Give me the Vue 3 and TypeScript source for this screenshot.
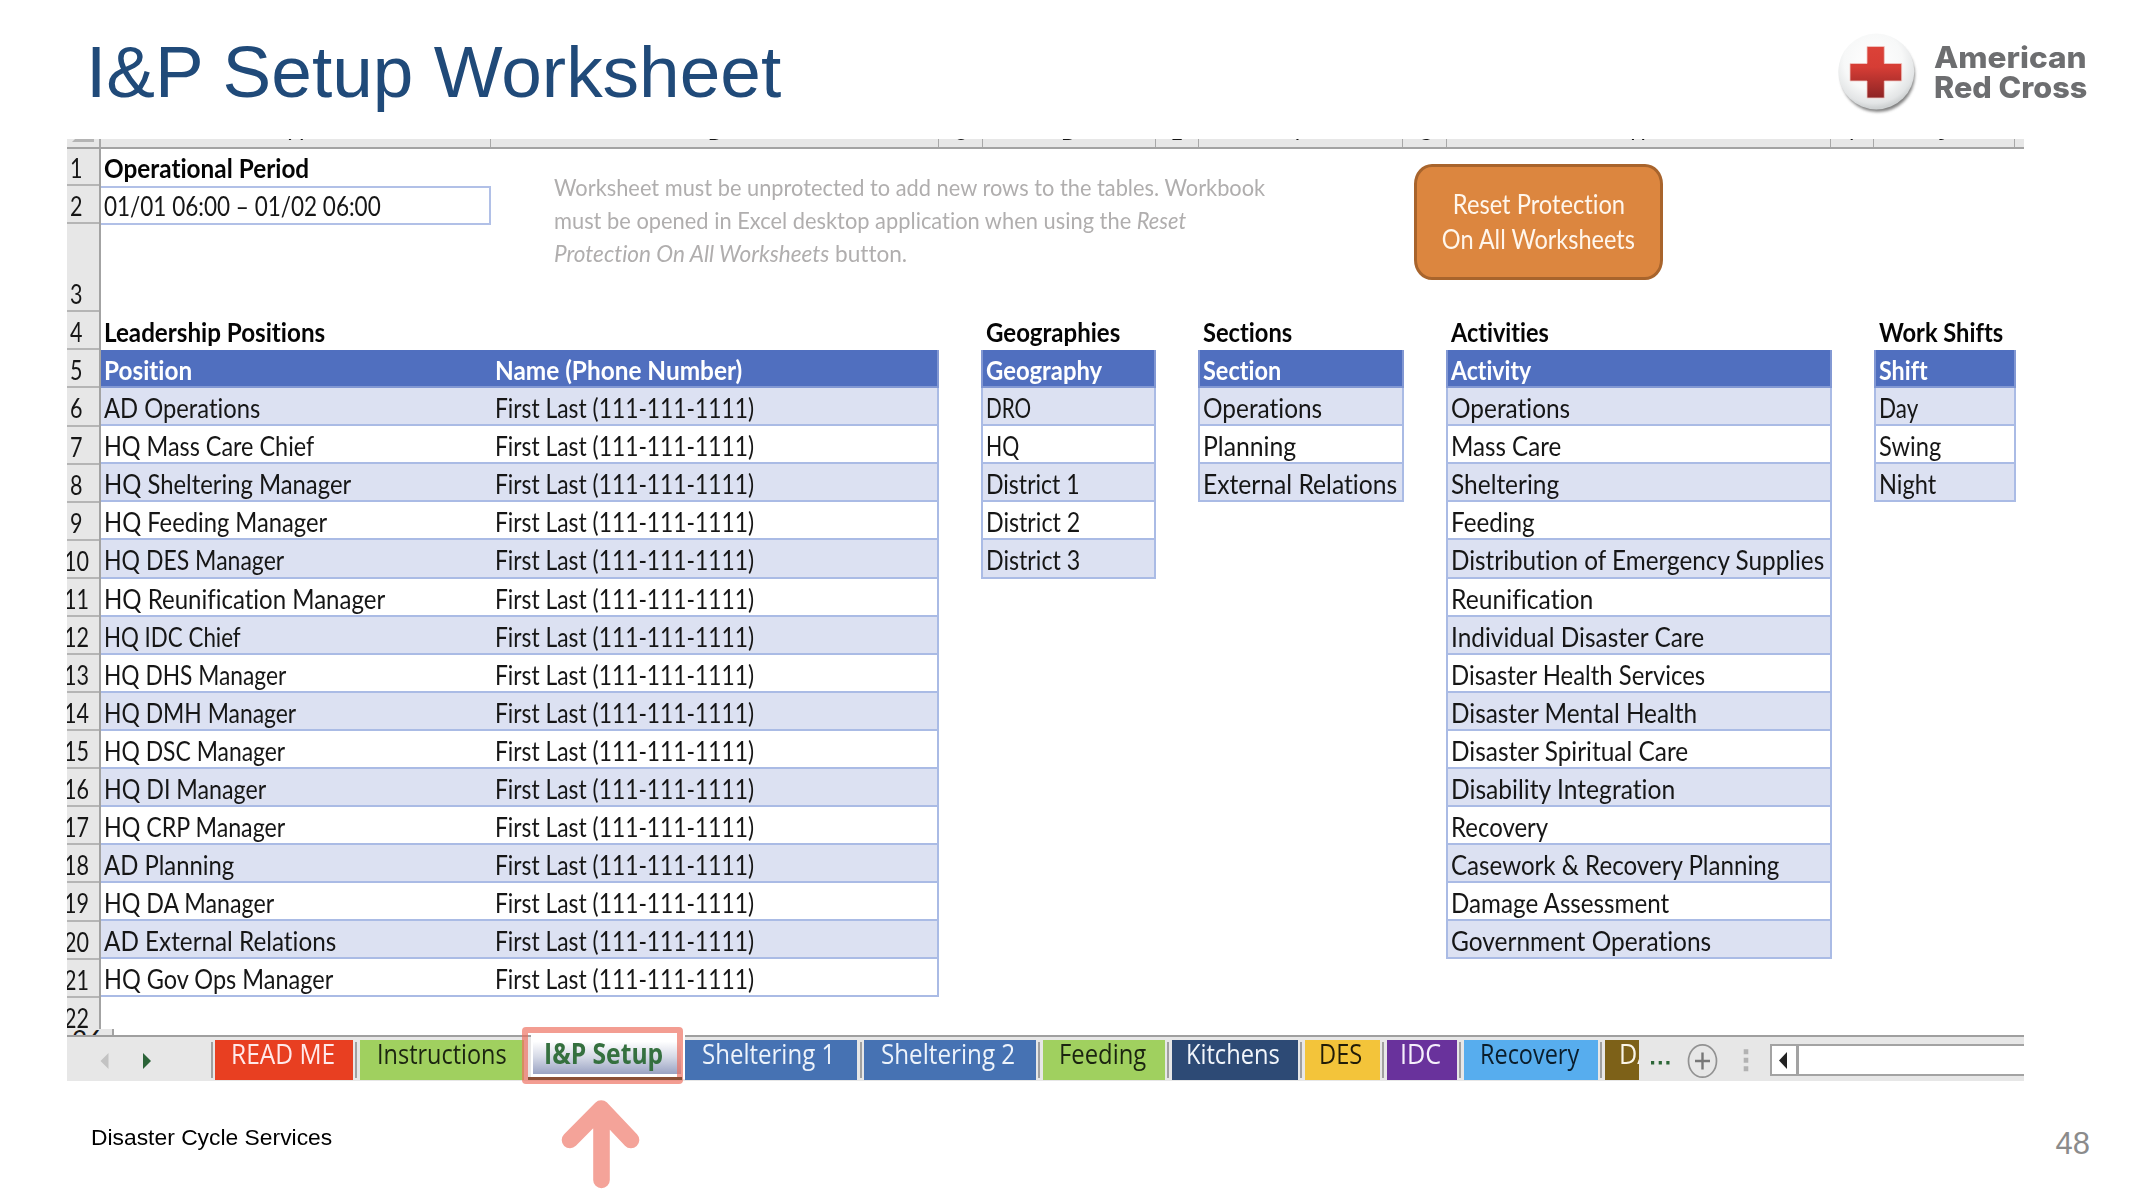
<script setup lang="ts">
import type { Directive } from 'vue'

type Cell = [text: string, width: number]

interface SheetTable {
  title: Cell
  head: Cell
  left: number
  width: number
  rows: Cell[]
}

interface Tab {
  label: string
  width: number
  textLeft: number
  textWidth: number
  bg: string
  fg: string
}

// Condenses a label horizontally so that it takes the given width.
const vFit: Directive<HTMLElement, number> = {
  mounted(el, binding) {
    const natural = el.getBoundingClientRect().width
    if (natural > 0) el.style.transform = `scaleX(${(binding.value + 1.2) / natural})`
  },
}

const columns: Cell[] = [
  ['A', 390], ['B', 448], ['C', 43.5], ['D', 173.5], ['E', 43], ['F', 204],
  ['G', 43.5], ['H', 384.5], ['I', 43], ['J', 141], ['', 9],
]

const rowNumbers = Array.from({ length: 22 }, (_, i) => i + 1)

const leaders: Cell[] = [
  ['AD Operations', 155], ['HQ Mass Care Chief', 209], ['HQ Sheltering Manager', 246],
  ['HQ Feeding Manager', 222], ['HQ DES Manager', 179], ['HQ Reunification Manager', 280],
  ['HQ IDC Chief', 135.5], ['HQ DHS Manager', 181], ['HQ DMH Manager', 191],
  ['HQ DSC Manager', 180], ['HQ DI Manager', 161], ['HQ CRP Manager', 180],
  ['AD Planning', 129], ['HQ DA Manager', 169], ['AD External Relations', 231],
  ['HQ Gov Ops Manager', 228],
]

const tables: SheetTable[] = [
  {
    title: ['Geographies', 133], head: ['Geography', 115], left: 42, width: 175,
    rows: [['DRO', 44], ['HQ', 32], ['District 1', 92.5], ['District 2', 93], ['District 3', 93]],
  },
  {
    title: ['Sections', 88], head: ['Section', 77], left: 42, width: 206,
    rows: [['Operations', 118], ['Planning', 92], ['External Relations', 193]],
  },
  {
    title: ['Activities', 96.5], head: ['Activity', 79], left: 42, width: 386,
    rows: [
      ['Operations', 118], ['Mass Care', 109], ['Sheltering', 107], ['Feeding', 82.5],
      ['Distribution of Emergency Supplies', 372], ['Reunification', 141],
      ['Individual Disaster Care', 252], ['Disaster Health Services', 253],
      ['Disaster Mental Health', 245], ['Disaster Spiritual Care', 236],
      ['Disability Integration', 223], ['Recovery', 96], ['Casework & Recovery Planning', 327],
      ['Damage Assessment', 217], ['Government Operations', 259],
    ],
  },
  {
    title: ['Work Shifts', 123], head: ['Shift', 47.5], left: 42, width: 142,
    rows: [['Day', 38], ['Swing', 61], ['Night', 56]],
  },
]

const tabs: Tab[] = [
  { label: 'READ ME', width: 138, textLeft: 17.3, textWidth: 103, bg: '#e83f21', fg: '#ffe9ea' },
  { label: 'Instructions', width: 164, textLeft: 18.3, textWidth: 128.5, bg: '#a0d05f', fg: '#1b2410' },
  { label: 'I&P Setup', width: 154.5, textLeft: 12.7, textWidth: 118, bg: '', fg: '#35703f' },
  { label: 'Sheltering 1', width: 172, textLeft: 18.5, textWidth: 132, bg: '#4672b3', fg: '#edf3fb' },
  { label: 'Sheltering 2', width: 172, textLeft: 18.5, textWidth: 133, bg: '#4672b3', fg: '#edf3fb' },
  { label: 'Feeding', width: 122, textLeft: 17.3, textWidth: 86, bg: '#a0d05f', fg: '#1b2410' },
  { label: 'Kitchens', width: 126, textLeft: 15.5, textWidth: 92.5, bg: '#2d4a75', fg: '#f2f6fb' },
  { label: 'DES', width: 75, textLeft: 16, textWidth: 42, bg: '#f3c43a', fg: '#211c08' },
  { label: 'IDC', width: 70, textLeft: 14.5, textWidth: 40, bg: '#69329c', fg: '#f5effb' },
  { label: 'Recovery', width: 134, textLeft: 17.5, textWidth: 98, bg: '#57adee', fg: '#0b1d2b' },
  { label: 'DA', width: 34, textLeft: 16, textWidth: 33, bg: '#7d6118', fg: '#faf5e8' },
]
</script>

<template>
  <main class="slide">
    <header class="top">
      <h1 class="title"><span v-fit="694">I&amp;P Setup Worksheet</span></h1>
      <div class="brand">
        <svg class="brand-mark" width="90" height="90" viewBox="0 0 90 90">
          <defs>
            <radialGradient id="disc" cx=".46" cy=".36" r=".62">
              <stop offset="0" stop-color="#fff" />
              <stop offset=".62" stop-color="#f7f8f8" />
              <stop offset=".9" stop-color="#e3e5e6" />
              <stop offset="1" stop-color="#cfd2d3" />
            </radialGradient>
            <linearGradient id="cross" x1="0" y1="0" x2="0" y2="1">
              <stop offset="0" stop-color="#dc4238" />
              <stop offset=".4" stop-color="#d63d35" />
              <stop offset="1" stop-color="#8d2425" />
            </linearGradient>
            <filter id="soft" x="-20%" y="-20%" width="140%" height="140%">
              <feGaussianBlur stdDeviation="1.8" />
            </filter>
          </defs>
          <circle cx="45.800" cy="47" r="37" fill="#555" opacity=".75" filter="url(#soft)" />
          <circle cx="44.300" cy="43.500" r="38" fill="url(#disc)" />
          <path d="M35 18.500h17.300v17h17.400v17.500h-17.400v17h-17.300v-17h-17v-17.500h17z" fill="url(#cross)" stroke="#f0c9c5" stroke-width=".8" />
        </svg>
        <div class="brand-name">
          <span v-fit="151.500">American</span>
          <span v-fit="152">Red Cross</span>
        </div>
      </div>
    </header>

    <section class="sheet">
      <div class="col-heads">
        <div class="corner"><i></i></div>
        <div v-for="c in columns" :key="c[0]" class="col-head" :style="{ width: c[1] + 'px' }">
          <span>{{ c[0] }}</span>
        </div>
      </div>

      <div class="grid">
        <div class="row-heads">
          <div v-for="n in rowNumbers" :key="n" class="row-head" :class="'r' + n">
            <span v-fit="n > 9 ? 23.800 : 11.300">{{ n }}</span>
          </div>
        </div>

        <div class="cells">
          <div class="intro">
            <div class="period">
              <div class="cell strong"><span v-fit="204">Operational Period</span></div>
              <div class="cell boxed"><span v-fit="275.500">01/01 06:00 – 01/02 06:00</span></div>
            </div>
            <p class="note">
              <span v-fit="710">Worksheet must be unprotected to add new rows to the tables. Workbook</span>
              <span v-fit="631">must be opened in Excel desktop application when using the <em>Reset</em></span>
              <span v-fit="352"><em>Protection On All Worksheets</em> button.</span>
            </p>
            <button class="reset" type="button">
              <span v-fit="171">Reset Protection</span>
              <span v-fit="192">On All Worksheets</span>
            </button>
          </div>

          <div class="tables">
            <div class="table leaders">
              <div class="cell strong"><span v-fit="220">Leadership Positions</span></div>
              <div class="pair head">
                <div class="cell"><span v-fit="87">Position</span></div>
                <div class="cell"><span v-fit="246">Name (Phone Number)</span></div>
              </div>
              <div v-for="l in leaders" :key="l[0]" class="pair line">
                <div class="cell"><span v-fit="l[1]">{{ l[0] }}</span></div>
                <div class="cell"><span v-fit="258">First Last (111-111-1111)</span></div>
              </div>
            </div>
            <div
              v-for="t in tables"
              :key="t.title[0]"
              class="table"
              :style="{ marginLeft: t.left + 'px', width: t.width + 'px' }"
            >
              <div class="cell strong"><span v-fit="t.title[1]">{{ t.title[0] }}</span></div>
              <div class="pair head"><div class="cell"><span v-fit="t.head[1]">{{ t.head[0] }}</span></div></div>
              <div v-for="r in t.rows" :key="r[0]" class="pair line">
                <div class="cell"><span v-fit="r[1]">{{ r[0] }}</span></div>
              </div>
            </div>
          </div>
        </div>
      </div>
      <div class="cut-row"><span>26</span></div>

      <div class="tab-bar">
        <div class="nav">
          <svg width="52" height="16" viewBox="0 0 52 16">
            <path d="M8.500 0v16L.5 8z" fill="#c3c3c3" />
            <path d="M43 0v16l8-8z" fill="#2b6338" />
          </svg>
        </div>
        <template v-for="t in tabs" :key="t.label">
          <i class="sep" :class="{ clear: t.label === 'I&P Setup' || t.label === 'Sheltering 1' }"></i>
          <div
            class="tab"
            :class="{ active: !t.bg }"
            :style="{ width: t.width + 'px', paddingLeft: t.textLeft - 1.5 + 'px', backgroundColor: t.bg, color: t.fg }"
          >
            <span v-fit="t.textWidth">{{ t.label }}</span>
            <b v-if="!t.bg" class="highlight"></b>
          </div>
        </template>
        <svg class="tools" width="112" height="44" viewBox="0 0 112 44">
          <path d="M12 24h3.200v3.500H12zM19.700 24h3.200v3.500h-3.200zM27.300 24h3.200v3.500h-3.200z" fill="#2c6637" />
          <ellipse cx="63.500" cy="24" rx="14" ry="16.200" fill="none" stroke="#929292" stroke-width="1.700" />
          <path d="M56 24h15M63.500 15.500v17" stroke="#777" stroke-width="2.400" fill="none" />
          <path d="M104.700 12.200h4.600v5h-4.600zM104.700 20.800h4.600v5h-4.600zM104.700 29.200h4.600v5h-4.600z" fill="#b2b2b2" />
        </svg>
        <div class="scroll">
          <div class="scroll-button">
            <svg width="8" height="17" viewBox="0 0 8 17"><path d="M8 0v17L0 8.500z" fill="#222" /></svg>
          </div>
        </div>
      </div>
    </section>

    <footer class="bottom">
      <span class="service" v-fit="240">Disaster Cycle Services</span>
      <svg class="arrow" width="80" height="92" viewBox="0 0 80 92">
        <path d="M9 42L40.200 10.500 70 42M40.500 14V82" fill="none" stroke="#f4a399" stroke-width="16.600" stroke-linecap="round" stroke-linejoin="round" />
      </svg>
      <span class="page">48</span>
    </footer>
  </main>
</template>

<style>
body {
  margin: 0;
  background: #fff;
}
</style>

<style scoped>
.slide {
  width: 2136px;
  height: 1198px;
  overflow: hidden;
  display: flex;
  flex-direction: column;
  background: #fff;
  font-family: Lato, sans-serif;
  font-size: 26.400px;
  font-variant-ligatures: none;
  color: #161616;
}
.slide * {
  box-sizing: border-box;
}
span {
  display: inline-block;
  flex: none;
  white-space: nowrap;
  transform-origin: 0 50%;
}
.top {
  height: 139px;
  flex: none;
  display: flex;
  justify-content: space-between;
}
.title {
  margin: 30.500px 0 0 86.300px;
  font: 400 72px/83px "Liberation Sans", Arial, sans-serif;
  color: #204a79;
}
.brand {
  display: flex;
  width: 304.500px;
  padding-top: 27.800px;
}
.brand-name {
  display: flex;
  flex-direction: column;
  align-items: flex-start;
  padding: 15.500px 0 0 12px;
  font: 800 29.500px/29.200px Inter, sans-serif;
  color: #6d6e70;
}
.sheet {
  width: 1957px;
  height: 942px;
  flex: none;
  margin-left: 67px;
  display: flex;
  flex-direction: column;
}
.col-heads {
  display: flex;
  height: 9.500px;
  flex: none;
  background: #e7e7e7;
  border-bottom: 2px solid #a3a3a3;
  overflow: hidden;
}
.corner {
  width: 34px;
  border-right: 2px solid #a8a8a8;
  flex: none;
}
.corner i {
  display: block;
  width: 22px;
  height: 3px;
  margin-left: 5px;
  background: #b4b4b4;
  clip-path: polygon(14% 0, 100% 0, 100% 100%, 0 100%);
}
.col-head {
  flex: none;
  height: 8px;
  border-right: 1.500px solid #a8a8a8;
  display: flex;
  justify-content: center;
  overflow: hidden;
}
.col-head:last-child {
  border: 0;
}
.col-head span {
  margin-top: -28px;
  line-height: 38px;
  transform: scaleX(0.8);
  transform-origin: 50% 50%;
}
.grid {
  display: flex;
  height: 880px;
  flex: none;
  overflow: hidden;
}
.row-heads {
  width: 34px;
  flex: none;
  background: #e7e7e7;
  border-right: 2px solid #a3a3a3;
  overflow: hidden;
}
.row-head {
  height: 38.090px;
  border-bottom: 2px solid #b5b5b5;
  padding-left: 3.200px;
  line-height: 38px;
  padding-top: 1px;
}
.row-head.r1 {
  height: 37.500px;
  padding-top: 0;
}
.row-head.r3 {
  height: 88.200px;
  padding-top: 51px;
}
.row-head.r22 {
  border: 0;
}
.row-head.r10 ~ .row-head,
.row-head.r10 {
  padding-left: 0;
}
.row-head.r10 span,
.row-head.r10 ~ .row-head span {
  margin-left: -2.600px;
}
.cells {
  flex: none;
  width: 1923px;
}
.intro {
  display: flex;
  height: 163.600px;
  align-items: flex-start;
}
.period {
  width: 390px;
}
.cell {
  height: 38.090px;
  padding: 1px 0 0 3.300px;
  line-height: 38px;
  overflow: hidden;
}
.period .cell {
  height: 37px;
  padding-top: 0;
}
.period .boxed {
  height: 39px;
  border: 2px solid #b1c0e7;
  border-left: 0;
  padding-top: 0;
  line-height: 37px;
}
.strong {
  font-weight: 700;
  color: #050505;
}
.note {
  display: flex;
  flex-direction: column;
  align-items: flex-start;
  margin: 22px 0 0 63.300px;
  width: 858.700px;
  font-size: 23.500px;
  line-height: 33.200px;
  color: #b0aeae;
}
.reset {
  display: flex;
  flex-direction: column;
  align-items: center;
  width: 249px;
  height: 116px;
  margin: 15.800px 0 0 1px;
  padding: 20.200px 0 0;
  border: 3px solid #a8642c;
  border-radius: 18px / 20px;
  background: #dc863f;
  color: #fff6ec;
  font: 400 26.400px/35px Lato, sans-serif;
  font-variant-ligatures: none;
}
.reset span {
  transform-origin: 50% 50%;
}
.tables {
  display: flex;
  align-items: flex-start;
}
.table {
  flex: none;
}
.leaders {
  width: 838px;
}
.table > .strong {
  height: 38px;
  padding-left: 4.500px;
}
.table.leaders > .strong {
  padding-left: 3.300px;
}
.pair {
  display: flex;
  height: 38.090px;
  border: 2px solid #aabbe5;
  border-top: 0;
}
.leaders .pair {
  border-left: 0;
}
.leaders .cell:first-child {
  width: 391px;
}
.pair .cell {
  flex: none;
}
.table:not(.leaders) .pair .cell {
  padding-left: 2.500px;
}
.head {
  background: #506fbf;
  border-color: #8298d3;
  font-weight: 700;
  color: #fff;
}
.line:nth-child(odd) {
  background: #dce1f2;
}
.cut-row {
  display: flex;
  height: 6.500px;
  width: 47px;
  flex: none;
  overflow: hidden;
  background: #e7e7e7;
  border-right: 2px solid #a3a3a3;
}
.cut-row span {
  margin: -2px 0 0 5px;
  line-height: 26px;
}
.tab-bar {
  display: flex;
  height: 45.500px;
  flex: none;
  background: #e7e7e7;
  border-top: 2px solid #9f9f9f;
  align-items: flex-start;
}
.nav {
  width: 143px;
  flex: none;
  padding: 15.500px 0 0 33.300px;
  line-height: 0;
}
.sep {
  width: 2px;
  height: 36px;
  margin: 5px 2.500px 0 0.500px;
  background: #a0a0a0;
  flex: none;
}
.tab + .sep {
  margin: 5px 2.700px 0 2.200px;
}
.tab + .sep.clear {
  width: 0;
  margin: 0;
}
.tab {
  position: relative;
  display: flex;
  align-items: flex-start;
  flex: none;
  height: 40px;
  margin-top: 3px;
  font: 400 27.800px/38px "Open Sans", sans-serif;
  overflow: hidden;
}
.tab span {
  margin-top: -6px;
}
.tab.active {
  overflow: visible;
  margin: -5px 0 0 7px;
  height: 47px;
  border: 0 solid #fff;
  border-width: 8px 4px 5px 2px;
  background: linear-gradient(#fff 4%, #d5d9e6 50%, #9aa3c3) padding-box;
  font-weight: 700;
}
.highlight {
  position: absolute;
  left: -11px;
  top: -13.500px;
  width: 161.500px;
  height: 57px;
  border: 6.500px solid rgba(238, 111, 94, 0.68);
  border-radius: 4px;
}
.highlight::after {
  content: "";
  position: absolute;
  left: 0;
  right: -5px;
  bottom: -2px;
  height: 3px;
  background: #8a4f35;
}
.tools {
  flex: none;
}
.scroll {
  flex: 1;
  height: 31.500px;
  margin: 7px 0 0 19.500px;
  border: 2px solid #a3a3a3;
  border-right: 0;
  background: #fff;
}
.scroll-button {
  width: 27px;
  height: 27.500px;
  border-right: 3px solid #a3a3a3;
  padding: 5.500px 0 0 7px;
  line-height: 0;
}
.bottom {
  position: relative;
  display: flex;
  justify-content: space-between;
  height: 117px;
  font-family: "Liberation Sans", Arial, sans-serif;
}
.service {
  margin: 43.500px 0 0 91px;
  font-size: 22.300px;
  line-height: 26px;
  height: 26px;
  color: #000;
}
.arrow {
  position: absolute;
  left: 561px;
  top: 17px;
}
.page {
  margin: 46px 46px 0 0;
  height: 34px;
  font-size: 31px;
  line-height: 34px;
  color: #8b8b8b;
}
</style>
